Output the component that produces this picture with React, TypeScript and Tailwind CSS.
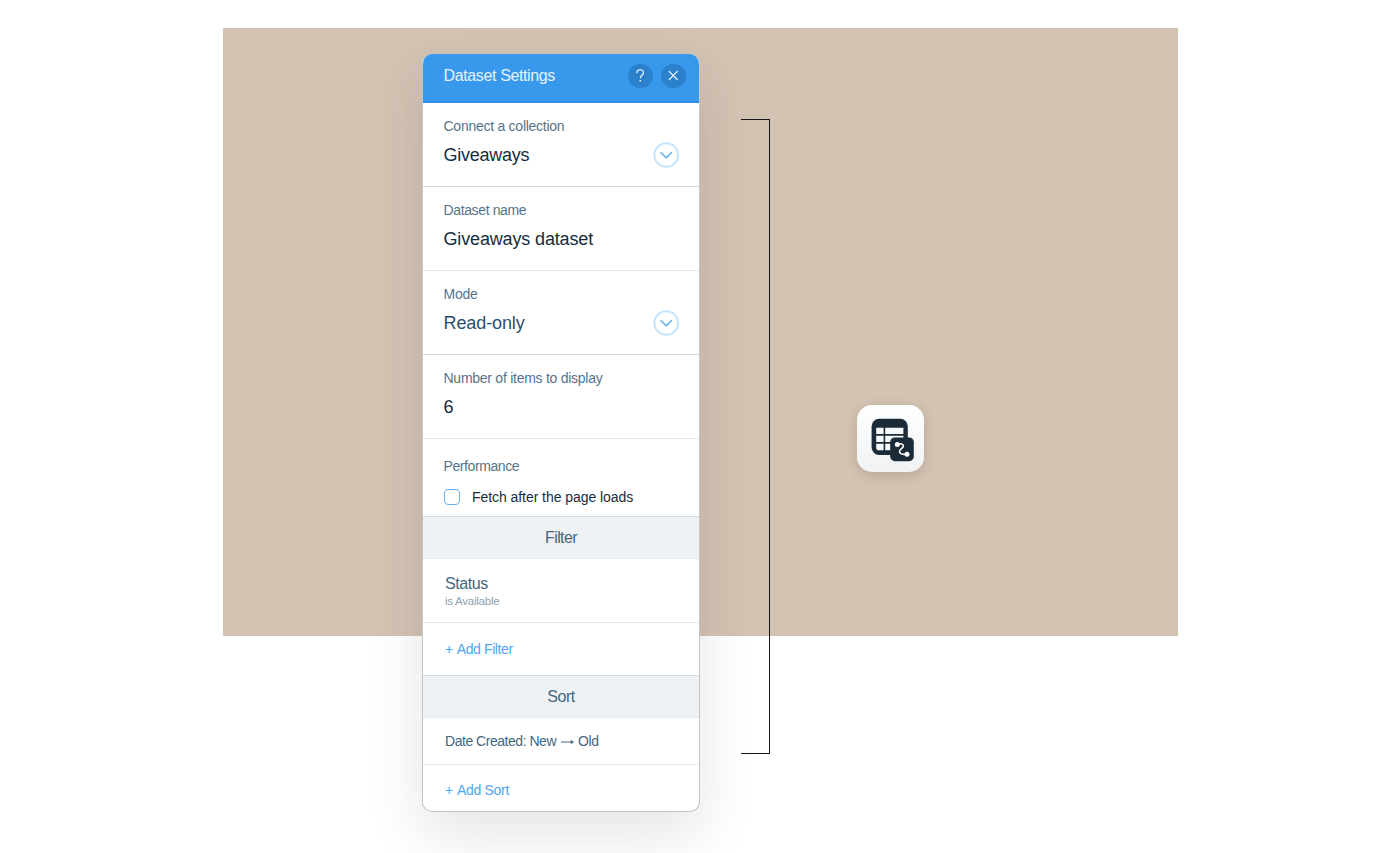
import type { ReactNode } from "react";

function Chevron() {
  return (
    <svg className="-mt-px" width="26" height="26" viewBox="0 0 26 26" fill="none">
      <circle cx="13.2" cy="13" r="11.8" stroke="#c1e4fe" strokeWidth="1.9" />
      <path d="M7.5 10.2 L13.2 15.8 L18.9 10.2" stroke="#58aaf0" strokeWidth="1.4" />
    </svg>
  );
}

function Field({
  label,
  labelClass = "",
  border = "border-[#e3eaf0]",
  dropdown = false,
  children,
}: {
  label: string;
  labelClass?: string;
  border?: string;
  dropdown?: boolean;
  children: ReactNode;
}) {
  return (
    <div className={`h-[84px] shrink-0 border-b pl-[20.5px] pr-5 pt-[13px] ${border}`}>
      <div className={`text-[14px] leading-5 text-[#55748c] ${labelClass}`}>{label}</div>
      <div className="mt-[6px] flex h-[26px] items-center justify-between text-[18px] leading-6">
        {children}
        {dropdown && <Chevron />}
      </div>
    </div>
  );
}

function DatasetIcon() {
  return (
    <svg width="67" height="67" viewBox="0 0 67 67" fill="none">
      <rect x="14.6" y="13.8" width="36.2" height="36.2" rx="7.5" fill="#1c2b38" />
      <path
        d="M19.2 22.8H26.6V29H19.2ZM28.2 22.8H46.4V29H28.2ZM19.2 30.7H26.6V37H19.2ZM28.2 30.7H46.4V37H28.2ZM19.2 38.7H26.6V45.2H22A2.8 2.8 0 0 1 19.2 42.4ZM28.2 38.7H46.4V45.2H28.2Z"
        fill="#f7f8f9"
      />
      <rect x="33.2" y="32.4" width="23.6" height="23.8" rx="4.6" fill="#1c2b38" />
      <circle cx="40.3" cy="39.5" r="2.5" fill="#fff" />
      <circle cx="50" cy="49.2" r="2.5" fill="#fff" />
      <path
        d="M40.3 39.5C43.3 38 46.6 39 46.4 41.2C46.2 43.4 41.9 44.3 42.5 46.9C43.2 49.5 46.9 49.6 50 49.2"
        stroke="#fff"
        strokeWidth="1.6"
        strokeLinecap="round"
      />
    </svg>
  );
}

export default function App() {
  return (
    <div className="h-[853px] w-[1400px] overflow-hidden bg-white pl-[223px] pt-[28px] font-['Liberation_Sans',Arial,sans-serif]">
      <div className="flex h-[608px] w-[955px] items-start bg-[#d3c3b3]">
        <div className="ml-[199px] mt-[26px] flex h-[758px] w-[278px] shrink-0 flex-col overflow-hidden rounded-[10px] border-x border-b border-[#c3c5c7] bg-white shadow-[0_22px_56px_2px_rgba(0,0,0,0.10)]">
          <div className="flex h-[49px] shrink-0 items-start border-b-2 border-[#2d8ce6] bg-[#3899ec] pl-[20.5px] pr-[13.5px] pt-[9.5px]">
            <div className="flex-1 pt-[2px] text-[16px] leading-5 tracking-[-0.37px] text-[#e3f2fe]">Dataset Settings</div>
            <div className="flex gap-[8.5px]">
              <div className="flex size-[24.5px] items-center justify-center rounded-full bg-[#2b81cb]">
                <svg width="25" height="25" viewBox="0 0 25 25" fill="none" stroke="#fff" strokeWidth="1.2">
                  <path d="M9 10.1C9 7.9 10.3 6.6 12.4 6.6C14.5 6.6 15.8 7.9 15.8 9.7C15.8 12.2 12.5 12.3 12.5 15.3" />
                  <path d="M12.5 17V18.6" strokeWidth="1.4" />
                </svg>
              </div>
              <div className="flex size-[24.5px] items-center justify-center rounded-full bg-[#2b81cb]">
                <svg width="25" height="25" viewBox="0 0 25 25" fill="none" stroke="#fff" strokeWidth="1.3">
                  <path d="M8 8L17 17M17 8L8 17" />
                </svg>
              </div>
            </div>
          </div>

          <Field label="Connect a collection" labelClass="tracking-[-0.26px]" border="border-[#cbd8e3]" dropdown>
            <span className="tracking-[-0.24px] text-[#162d3d]">Giveaways</span>
          </Field>
          <Field label="Dataset name" labelClass="tracking-[-0.37px]">
            <span className="tracking-[-0.15px] text-[#162d3d]">Giveaways dataset</span>
          </Field>
          <Field label="Mode" labelClass="tracking-[-0.26px]" border="border-[#cbd8e3]" dropdown>
            <span className="-mt-px tracking-[-0.1px] text-[#2a5070]">Read-only</span>
          </Field>
          <Field label="Number of items to display" labelClass="tracking-[-0.26px]">
            <span className="text-[#162d3d]">6</span>
          </Field>

          <div className="h-[78px] shrink-0 border-b border-[#d2dde7] pl-[20.5px] pt-[17px]">
            <div className="text-[14px] leading-5 tracking-[-0.4px] text-[#55748c]">Performance</div>
            <div className="mt-[11px] flex h-5 items-center">
              <div className="size-[16.5px] rounded-[4px] border-[1.5px] border-[#6ab3f3]" />
              <span className="ml-3 text-[14px] leading-5 tracking-[-0.06px] text-[#162d3d]">Fetch after the page loads</span>
            </div>
          </div>

          <div className="flex h-[42px] shrink-0 items-center justify-center border-b border-[#e3eaf0] bg-[#eef2f5] pt-px text-[16px] tracking-[-0.6px] text-[#44667f]">
            Filter
          </div>
          <div className="h-[64px] shrink-0 border-b border-[#e3eaf0] pl-[22px] pt-[15px]">
            <div className="text-[16px] leading-5 tracking-[-0.4px] text-[#44667f]">Status</div>
            <div className="-mt-px text-[11.5px] leading-4 tracking-[-0.25px] text-[#8b9fae]">is Available</div>
          </div>
          <div className="flex h-[53px] shrink-0 items-center border-b border-[#d2dde7] pl-[22px] text-[14px] tracking-[-0.4px] text-[#4ea6f0]">
            <span className="mr-[4px]">+</span>Add Filter
          </div>
          <div className="flex h-[42px] shrink-0 items-center justify-center border-b border-[#e3eaf0] bg-[#eef2f5] pt-px text-[16px] tracking-[-0.4px] text-[#44667f]">
            Sort
          </div>
          <div className="flex h-[47px] shrink-0 items-center border-b border-[#e3eaf0] pl-[22px] text-[14px] tracking-[-0.47px] text-[#44667f]">
            Date Created: New
            <svg className="ml-[4.5px] mr-[3.5px] mt-[2px]" width="14" height="8" viewBox="0 0 14 8" fill="none" stroke="#44667f">
              <path d="M0 4H11" />
              <path d="M9.8 1.8L13 4L9.8 6.2Z" fill="#44667f" stroke="none" />
            </svg>
            Old
          </div>
          <div className="flex flex-1 items-center pl-[22px] pt-[5px] text-[14px] tracking-[-0.3px] text-[#4ea6f0]">
            <span className="mr-[4px]">+</span>Add Sort
          </div>
        </div>

        <div className="ml-[41px] mt-[91px] h-[635px] w-[29px] shrink-0 border-y border-r border-[#161616]" />

        <div className="ml-[87px] mt-[377px] size-[67px] shrink-0 rounded-[15px] bg-linear-to-b from-white to-[#f0f2f4] shadow-[0_3px_12px_rgba(70,50,30,0.2)]">
          <DatasetIcon />
        </div>
      </div>
    </div>
  );
}
